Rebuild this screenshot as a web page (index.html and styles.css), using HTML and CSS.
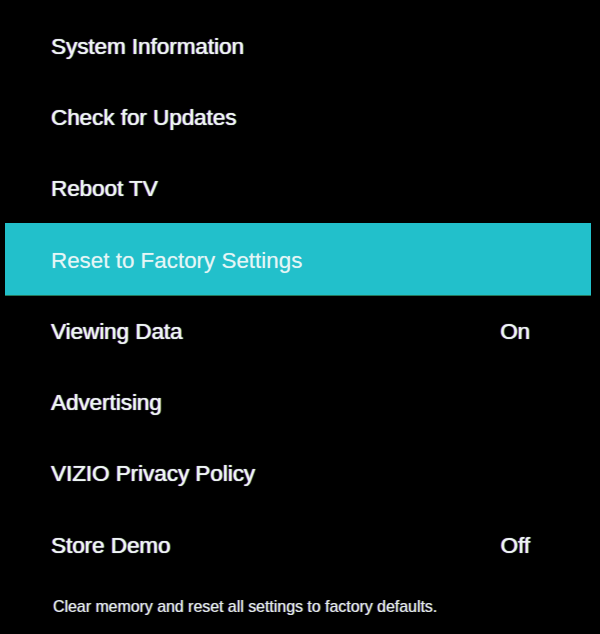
FILE: index.html
```html
<!DOCTYPE html>
<html lang="en">
<head>
    <meta charset="UTF-8">
    <meta name="viewport" content="width=device-width, initial-scale=1.0">
    <title>Admin &amp; Privacy</title>
    <link rel="stylesheet" href="styles.css">
</head>
<body>
    <div class="menu">
        <ul class="menu-list">
            <li class="menu-item">System Information</li>
            <li class="menu-item">Check for Updates</li>
            <li class="menu-item">Reboot TV</li>
            <li class="menu-item active">Reset to Factory Settings</li>
            <li class="menu-item">Viewing Data <span class="value">On</span></li>
            <li class="menu-item">Advertising</li>
            <li class="menu-item">VIZIO Privacy Policy</li>
            <li class="menu-item">Store Demo <span class="value">Off</span></li>
        </ul>

        <p class="hint">Clear memory and reset all settings to factory defaults.</p>
    </div>
</body>
</html>
```

FILE: styles.css
```css
* {
    margin: 0;
    padding: 0;
    box-sizing: border-box;
}

body {
    font-family: "Liberation Sans", Arial, sans-serif;
    background: #000;
    color: #eef6f6;
    width: 600px;
    height: 634px;
    overflow: hidden;
}

.menu {
    padding-top: 9.5px;
}

.menu-list {
    list-style: none;
}

.menu-item {
    height: 71.3px;
    margin: 0 9px 0 5px;
    padding: 3px 61px 0 46px;
    display: flex;
    align-items: center;
    justify-content: space-between;
    font-size: 22.4px;
    text-shadow: -1px 0 rgba(255, 70, 140, 0.5), 1px 0 rgba(90, 255, 240, 0.5), 0 0 1px rgba(255, 255, 255, 0.6);
}

.menu-item.active {
    background: #22c0cb;
    color: #e6f6f6;
    text-shadow: 0 0 1px rgba(255, 255, 255, 0.4);
    box-shadow: 0 1px 0 rgba(60, 200, 150, 0.6);
}

.hint {
    margin: 18px 0 0 53px;
    font-size: 15.9px;
    color: #e2ebeb;
    text-shadow: -1px 0 rgba(255, 70, 140, 0.35), 1px 0 rgba(90, 255, 240, 0.35);
}
```
